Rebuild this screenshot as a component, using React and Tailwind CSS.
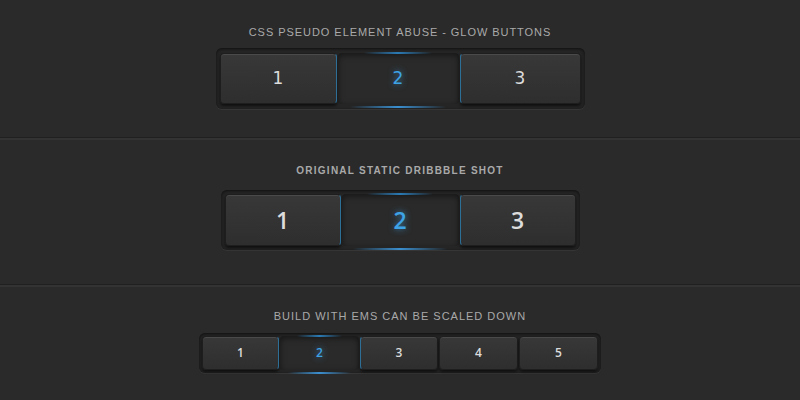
const title = "font-['Liberation_Sans',Arial,sans-serif] uppercase text-[#a9a9a9]";

function Btn({ label, active, w, h, size, edge, font }) {
  const base = `relative flex items-center justify-center rounded-[4px] ${w} ${h} ${size} ${font}`;
  if (active) {
    return (
      <div className={`${base} bg-[#2a2a2a] text-[#3ea3e6] [text-shadow:0_0_6px_rgba(62,163,230,0.7)] shadow-[inset_0_2px_6px_rgba(0,0,0,0.5)]`}>
        <span className="absolute top-[-1px] left-[22%] right-[22%] h-[2px] bg-[linear-gradient(90deg,transparent,#2a7ab5,transparent)]" />
        <span className="absolute bottom-[-4px] left-[10%] right-[10%] h-[2px] bg-[linear-gradient(90deg,transparent,#3a8fd0,transparent)]" />
        {label}
      </div>
    );
  }
  const edgeCls =
    edge === "right"
      ? "border-r-[#2d6f96]"
      : edge === "left"
      ? "border-l-[#2d6f96]"
      : "";
  return (
    <div
      className={`${base} bg-[linear-gradient(180deg,#383838,#2e2e2e)] text-[#dcdcdc] border border-[#1e1e1e] ${edgeCls} shadow-[inset_0_1px_0_#4a4a4a,0_2px_3px_rgba(0,0,0,0.6)]`}
    >
      {label}
    </div>
  );
}

function Tray({ children, pad }) {
  return (
    <div className={`flex gap-[1px] rounded-[6px] bg-[#252525] ${pad} shadow-[inset_0_1px_3px_rgba(0,0,0,0.6),0_1px_0_#363636]`}>
      {children}
    </div>
  );
}

const dejavu = "font-['DejaVu_Sans','Liberation_Sans',sans-serif]";
const open = "font-['Open_Sans','DejaVu_Sans',sans-serif] font-semibold";

export default function App() {
  return (
    <div className="w-[800px] h-[400px] bg-[#2a2a2a] overflow-hidden">
      <section className="h-[137px] flex flex-col items-center pt-[26px]">
        <h2 className={`${title} text-[11px] tracking-[0.95px] leading-[13px]`}>
          CSS Pseudo Element Abuse - Glow Buttons
        </h2>
        <div className="mt-[9px]">
          <Tray pad="px-[4px] py-[5px]">
            <Btn label="1" font={dejavu} w="w-[117px]" h="h-[51px]" size="text-[17px]" edge="right" />
            <Btn label="2" font={dejavu} active w="w-[121px]" h="h-[51px]" size="text-[17px]" />
            <Btn label="3" font={dejavu} w="w-[121px]" h="h-[51px]" size="text-[17px]" edge="left" />
          </Tray>
        </div>
      </section>
      <div className="h-[3px] border-t border-[#202020] bg-[#333333]" />
      <section className="h-[144px] flex flex-col items-center pt-[25px]">
        <h2 className={`${title} font-bold text-[10px] tracking-[1.25px] leading-[12px]`}>
          Original Static Dribbble Shot
        </h2>
        <div className="mt-[13px]">
          <Tray pad="px-[4px] py-[4px]">
            <Btn label="1" font={open} w="w-[116px]" h="h-[52px]" size="text-[23px]" edge="right" />
            <Btn label="2" font={open} active w="w-[117px]" h="h-[52px]" size="text-[23px]" />
            <Btn label="3" font={open} w="w-[116px]" h="h-[52px]" size="text-[23px]" edge="left" />
          </Tray>
        </div>
      </section>
      <div className="h-[3px] border-t border-[#202020] bg-[#333333]" />
      <section className="flex flex-col items-center pt-[23px]">
        <h2 className={`${title} text-[11px] tracking-[1px] leading-[13px]`}>
          Build with ems can be scaled down
        </h2>
        <div className="mt-[10px]">
          <Tray pad="px-[3px] py-[3px]">
            <Btn label="1" font={open} w="w-[77px]" h="h-[34px]" size="text-[12px]" edge="right" />
            <Btn label="2" font={open} active w="w-[79px]" h="h-[34px]" size="text-[12px]" />
            <Btn label="3" font={open} w="w-[78px]" h="h-[34px]" size="text-[12px]" edge="left" />
            <Btn label="4" font={open} w="w-[79px]" h="h-[34px]" size="text-[12px]" />
            <Btn label="5" font={open} w="w-[79px]" h="h-[34px]" size="text-[12px]" />
          </Tray>
        </div>
      </section>
    </div>
  );
}
